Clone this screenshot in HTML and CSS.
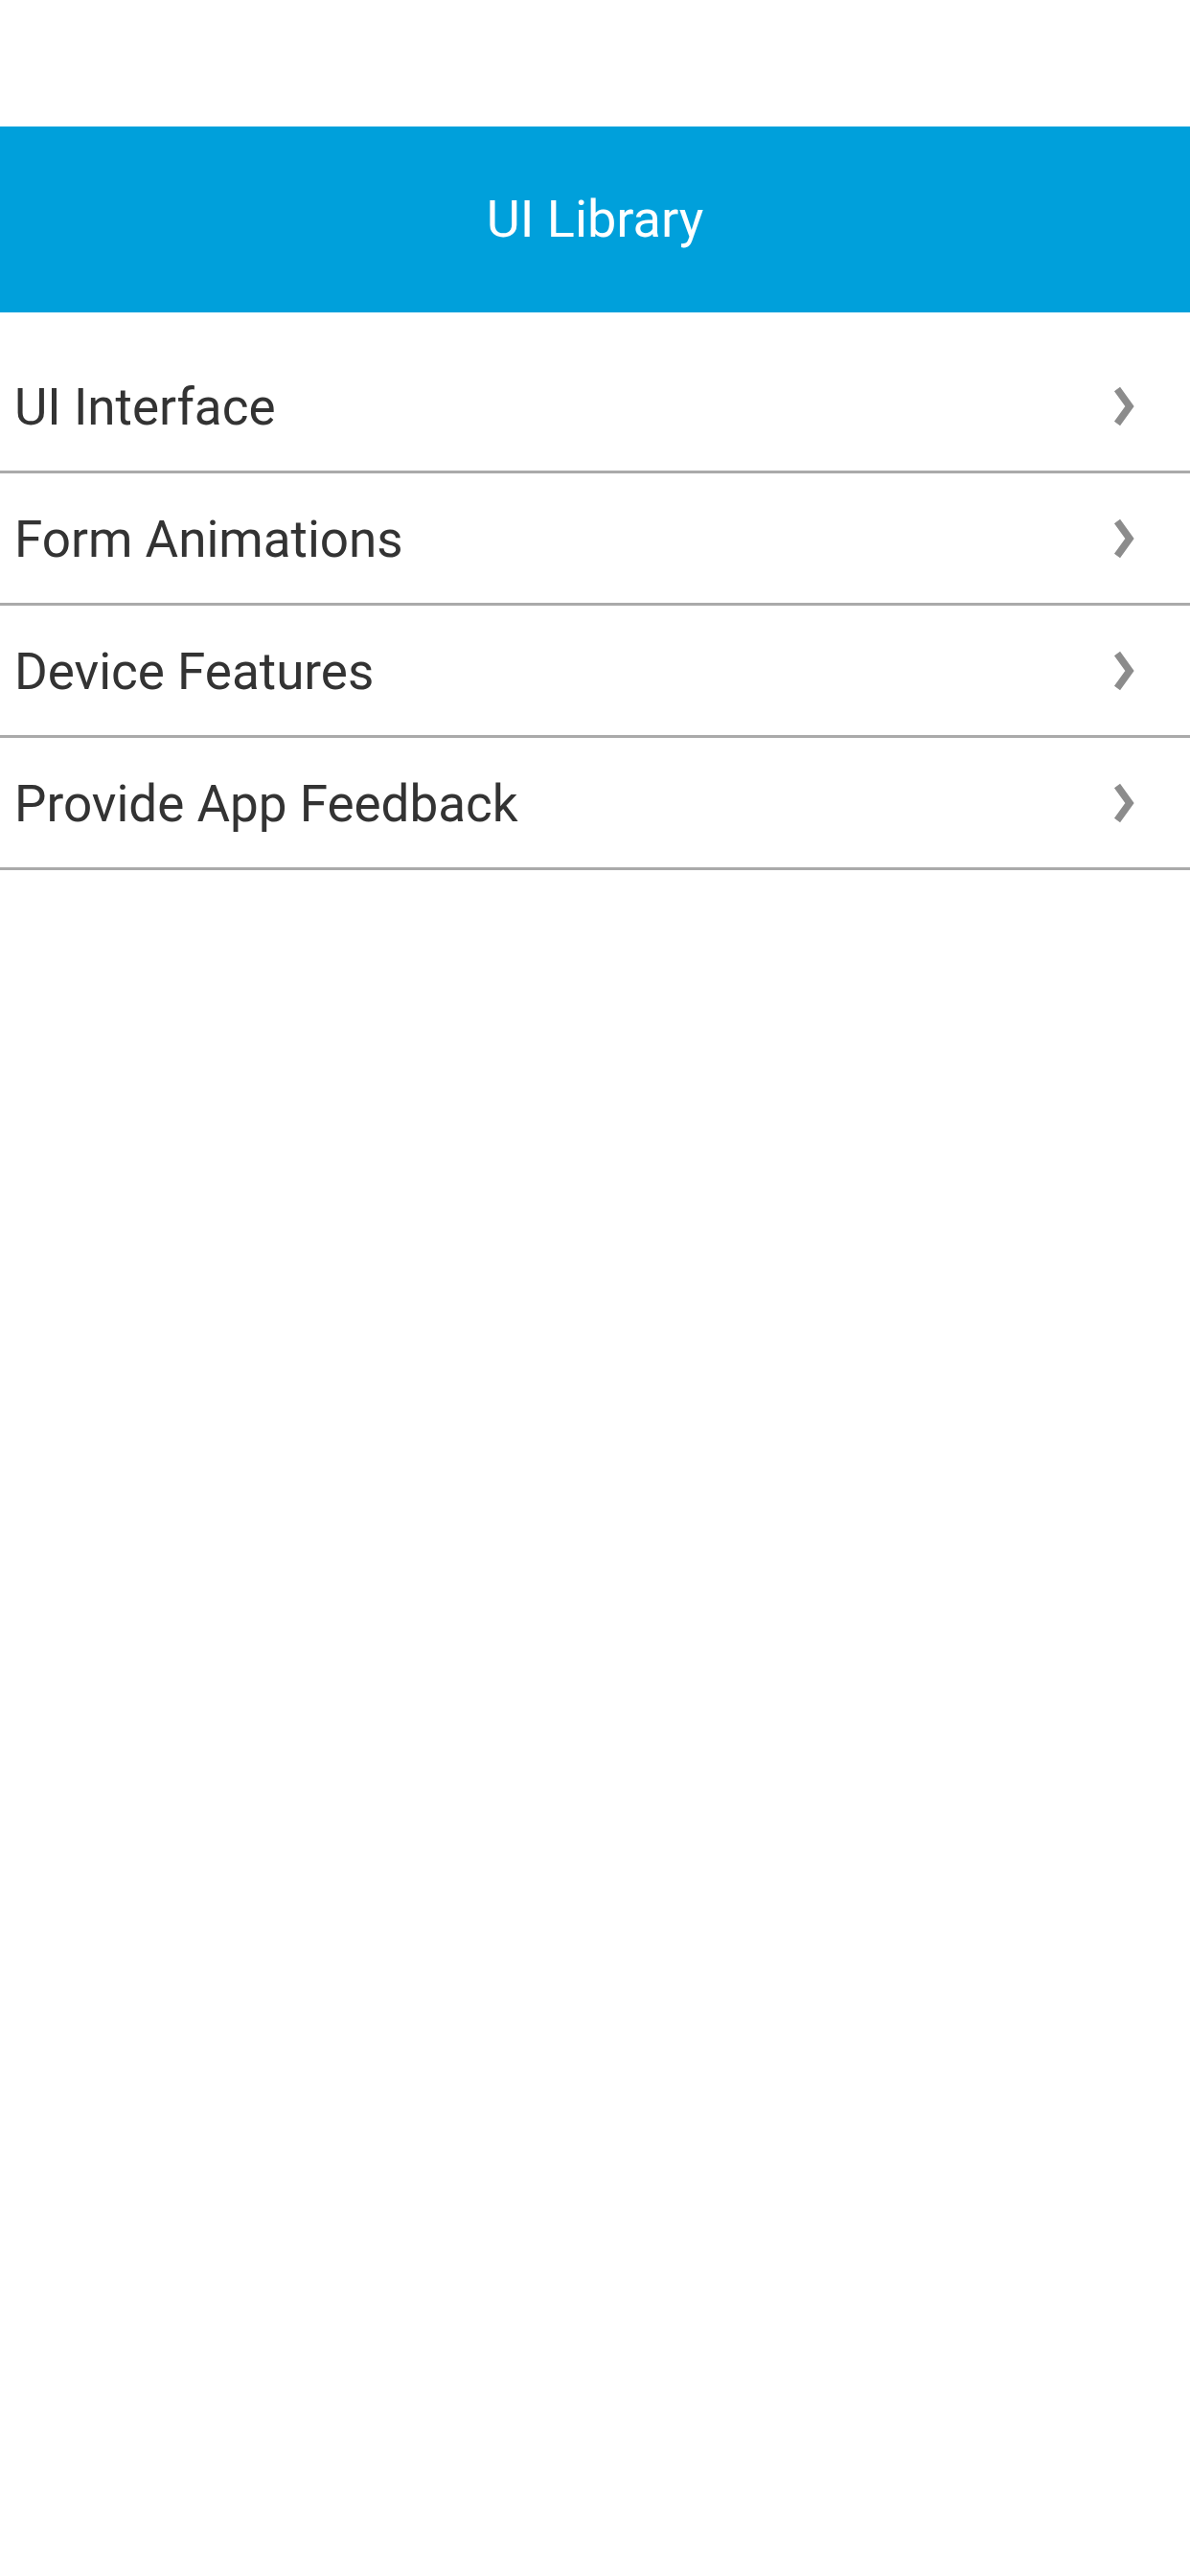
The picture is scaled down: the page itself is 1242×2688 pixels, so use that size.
FILE: index.html
```html
<!DOCTYPE html>
<html>
<head>
<meta charset="utf-8">
<link rel="stylesheet" href="styles.css">
</head>
<body>
<div class="statusbar"></div>
<header class="header"><h1 class="title">UI Library</h1></header>
<ul class="list">
  <li class="row"><span class="label">UI Interface</span><svg class="chev" viewBox="0 0 22 42"><polyline points="4,3 17,21 4,39"/></svg></li>
  <li class="row"><span class="label">Form Animations</span><svg class="chev" viewBox="0 0 22 42"><polyline points="4,3 17,21 4,39"/></svg></li>
  <li class="row"><span class="label">Device Features</span><svg class="chev" viewBox="0 0 22 42"><polyline points="4,3 17,21 4,39"/></svg></li>
  <li class="row"><span class="label">Provide App Feedback</span><svg class="chev" viewBox="0 0 22 42"><polyline points="4,3 17,21 4,39"/></svg></li>
</ul>
</body>
</html>
```
FILE: styles.css
```css
html, body {
  margin: 0;
  padding: 0;
  background: #fff;
  font-family: Roboto, "Noto Sans", Arial, sans-serif;
}
.statusbar {
  height: 132px;
  background: #fff;
}
.header {
  height: 194px;
  background: #00a0db;
  display: flex;
  align-items: center;
  justify-content: center;
}
.title {
  margin: 0;
  color: #fff;
  font-weight: 400;
  font-size: 54px;
  line-height: 1;
}
.list {
  list-style: none;
  margin: 30px 0 0 0;
  padding: 0;
}
.row {
  height: 135px;
  border-bottom: 3px solid #aaaaaa;
  display: flex;
  align-items: center;
  justify-content: space-between;
  padding: 4px 58px 0 15px;
  box-sizing: content-box;
}
.row {
  height: 131px;
}
.label {
  font-size: 53px;
  color: #333;
  line-height: 1;
}
.chev {
  width: 22px;
  height: 42px;
  margin-top: -4px;
}
.chev polyline {
  fill: none;
  stroke: #8c8c8c;
  stroke-width: 7.5;
  stroke-linejoin: miter;
  stroke-linecap: butt;
}
```
